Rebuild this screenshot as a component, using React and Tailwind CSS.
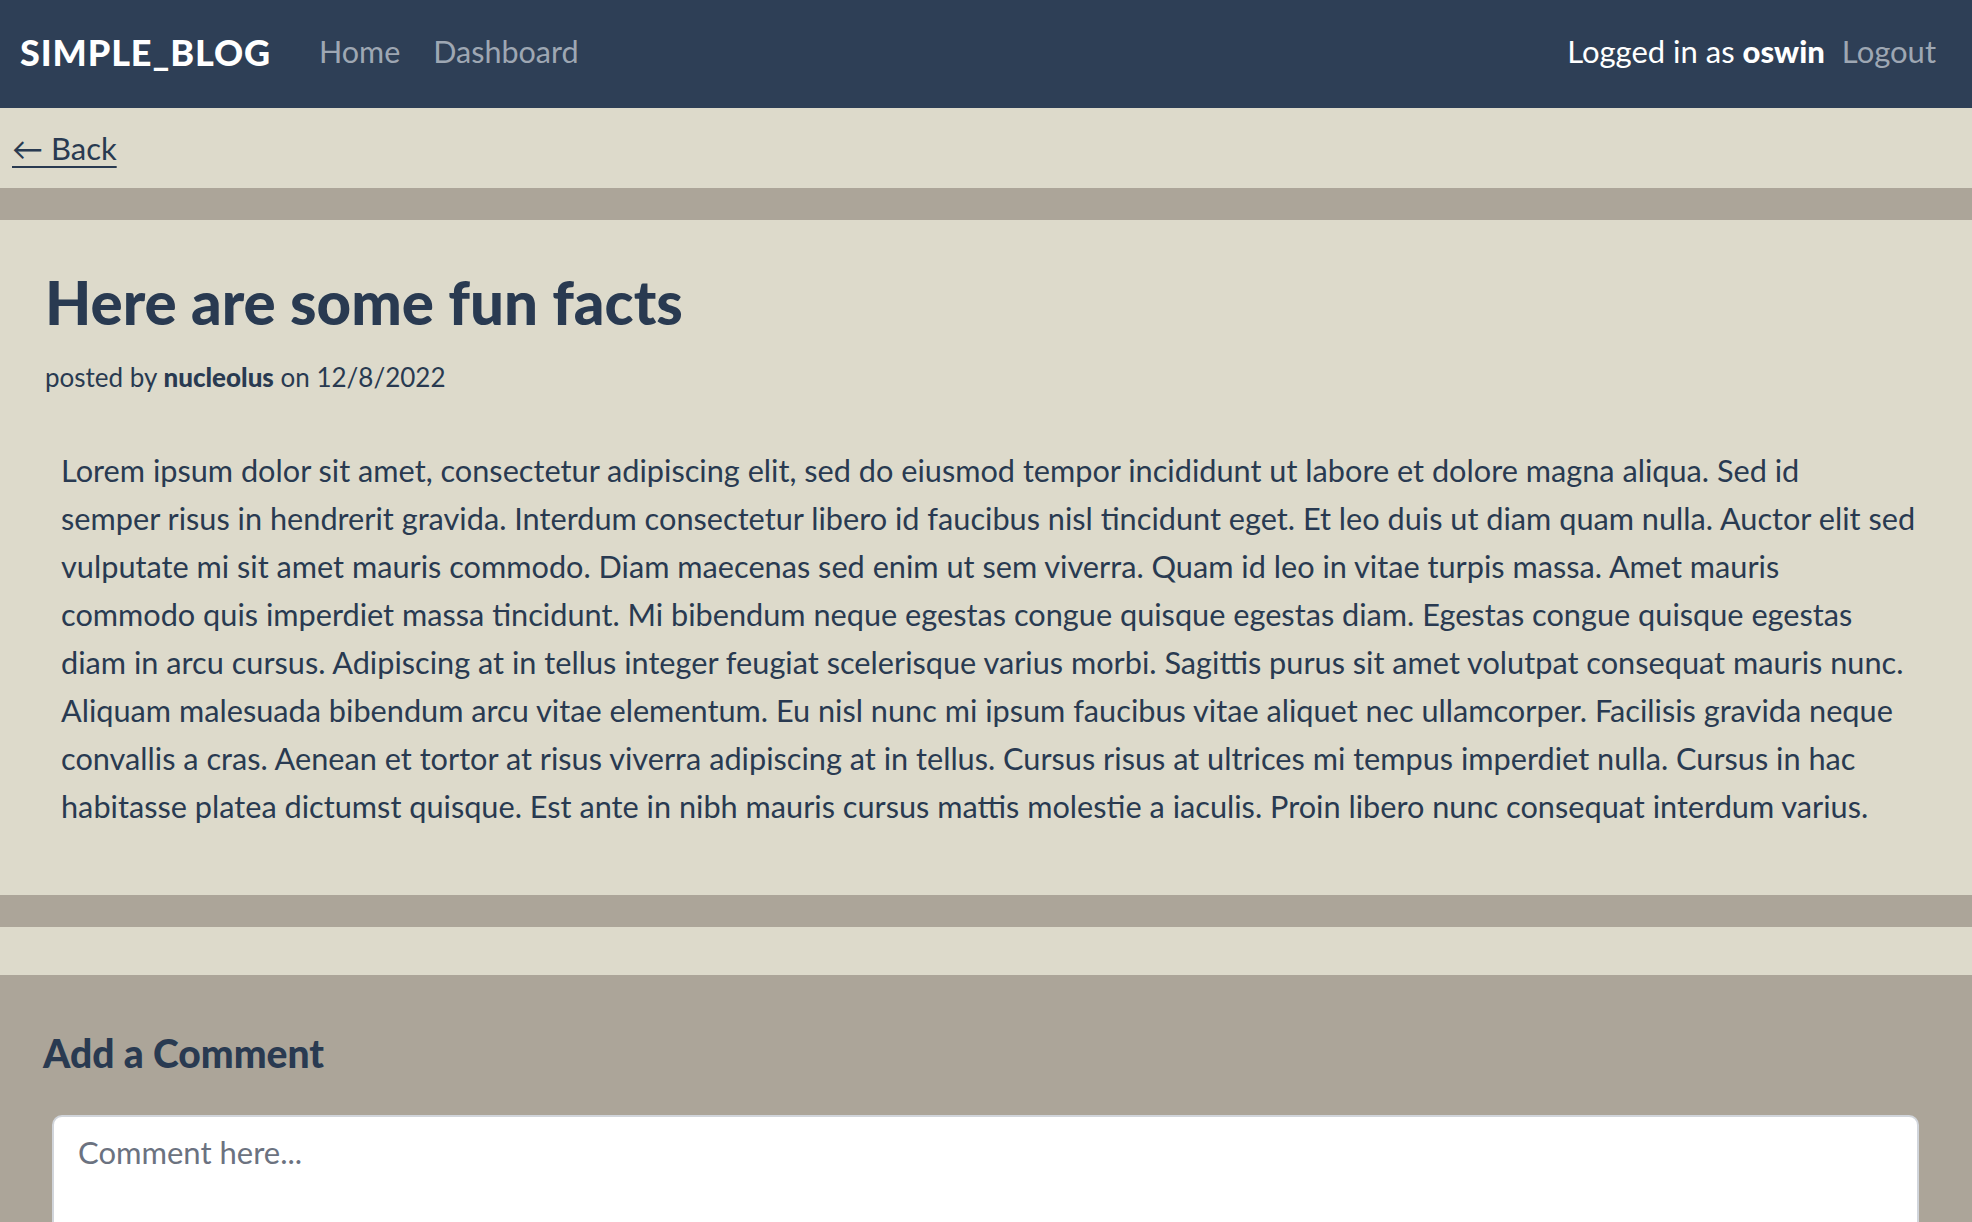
import React from "react";

const lines = [
  "Lorem ipsum dolor sit amet, consectetur adipiscing elit, sed do eiusmod tempor incididunt ut labore et dolore magna aliqua. Sed id",
  "semper risus in hendrerit gravida. Interdum consectetur libero id faucibus nisl tincidunt eget. Et leo duis ut diam quam nulla. Auctor elit sed",
  "vulputate mi sit amet mauris commodo. Diam maecenas sed enim ut sem viverra. Quam id leo in vitae turpis massa. Amet mauris",
  "commodo quis imperdiet massa tincidunt. Mi bibendum neque egestas congue quisque egestas diam. Egestas congue quisque egestas",
  "diam in arcu cursus. Adipiscing at in tellus integer feugiat scelerisque varius morbi. Sagittis purus sit amet volutpat consequat mauris nunc.",
  "Aliquam malesuada bibendum arcu vitae elementum. Eu nisl nunc mi ipsum faucibus vitae aliquet nec ullamcorper. Facilisis gravida neque",
  "convallis a cras. Aenean et tortor at risus viverra adipiscing at in tellus. Cursus risus at ultrices mi tempus imperdiet nulla. Cursus in hac",
  "habitasse platea dictumst quisque. Est ante in nibh mauris cursus mattis molestie a iaculis. Proin libero nunc consequat interdum varius.",
];

export default function App() {
  return (
    <div className="min-h-screen bg-[#aca599] font-['Lato',sans-serif] text-[#293a51]">
      {/* top nav */}
      <header className="h-[108px] bg-[#2e3f56] flex items-center justify-between pl-[20px] pr-[36px] pb-[5px]">
        <div className="flex items-center">
          <span className="text-[36px] font-black text-white tracking-[0.025em]">SIMPLE_BLOG</span>
          <nav className="flex items-center gap-[33px] ml-[48px] text-[30.5px] text-[#9ea7b3]">
            <a href="#">Home</a>
            <a href="#">Dashboard</a>
          </nav>
        </div>
        <div className="flex items-center text-[31px]">
          <span className="text-white">
            Logged in as <b className="font-black">oswin</b>
          </span>
          <a href="#" className="ml-[17px] text-[#9ea7b3]">Logout</a>
        </div>
      </header>

      {/* back link */}
      <div className="h-[80px] bg-[#dddacb] flex items-center px-[12px]">
        <a href="#" className="text-[31px] underline underline-offset-[6px] decoration-2">
          ← Back
        </a>
      </div>

      <div className="h-[32px]" />

      {/* post */}
      <article className="bg-[#dddacb] pl-[45px] pr-[60px] pt-[47px] pb-[64px]">
        <h1 className="text-[60px] leading-[71px] font-black">Here are some fun facts</h1>
        <p className="mt-[18px] text-[26px] leading-[42px]">
          posted by <b className="font-black">nucleolus</b> on 12/8/2022
        </p>
        <p className="mt-[49px] ml-[16px] text-[30.7px] leading-[48px] whitespace-nowrap">
          {lines.map((l, i) => (
            <React.Fragment key={i}>
              {l}
              {i < lines.length - 1 && <br />}
            </React.Fragment>
          ))}
        </p>
      </article>

      <div className="h-[32px]" />

      {/* comments list (empty) */}
      <div className="h-[48px] bg-[#dddacb]" />

      {/* add comment */}
      <section className="pt-[56px] px-[43px] pb-[40px]">
        <h2 className="text-[39px] leading-[44px] font-black">Add a Comment</h2>
        <textarea
          className="mt-[40px] mx-[9px] block w-[1867px] h-[200px] bg-white border-2 border-[#d1d5db] rounded-[10px] px-[24px] pt-[11px] text-[31px] leading-[48px] text-[#293a51] placeholder:text-[#6b7280] outline-none resize-none"
          placeholder="Comment here..."
        />
      </section>
    </div>
  );
}
